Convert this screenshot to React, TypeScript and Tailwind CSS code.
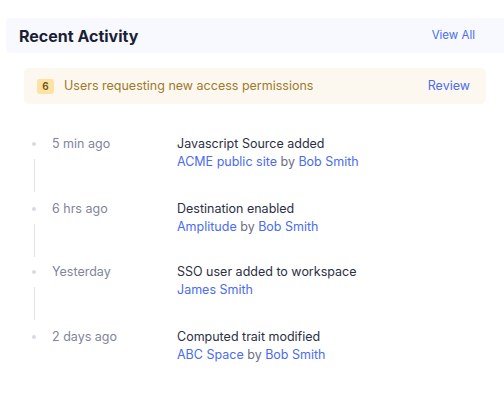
import React from "react";

interface IActivity {
    time: string;
    title: string;
    target?: string;
    actor: string;
    height: string;
}

const activities: IActivity[] = [
    { time: "5 min ago", title: "Javascript Source added", target: "ACME public site", actor: "Bob Smith", height: "h-[65px]" },
    { time: "6 hrs ago", title: "Destination enabled", target: "Amplitude", actor: "Bob Smith", height: "h-[63px]" },
    { time: "Yesterday", title: "SSO user added to workspace", actor: "James Smith", height: "h-[65px]" },
    { time: "2 days ago", title: "Computed trait modified", target: "ABC Space", actor: "Bob Smith", height: "h-[65px]" },
];

const App: React.FC = () => {
    return (
        <div className="w-full h-[406px] bg-white overflow-hidden font-['Inter','Noto_Sans',sans-serif] pt-[18px]">
            <div className="ml-[6px] h-[35px] bg-[#f8f9fe] rounded-l-[4px] flex items-center justify-between pl-[13px] pr-[29px]">
                <h2 className="text-[16px] font-bold text-[#1a1f36]">Recent Activity</h2>
                <button className="text-[11.5px] text-[#4b6cf0]">View All</button>
            </div>

            <div className="mt-[15px] ml-[24px] mr-[18px] h-[36px] bg-[#fdf8ef] rounded-[5px] flex items-center pl-[13px] pr-[16px]">
                <span className="w-[17px] h-[15px] rounded-[3px] bg-[#fde3a3] text-[#6b4f16] text-[10px] font-semibold flex items-center justify-center">6</span>
                <span className="ml-[10px] text-[12.5px] text-[#a07a2c] flex-1">Users requesting new access permissions</span>
                <button className="text-[12.5px] text-[#4b6cf0]">Review</button>
            </div>

            <div className="mt-[31px] pl-[32px]">
                {activities.map((item, index) => (
                    <div key={index} className={`flex ${item.height}`}>
                        <div className="w-[4px] flex flex-col items-center pt-[7px]">
                            <div className="w-[4px] h-[4px] rounded-full bg-[#d8dbe3]" />
                            {index < activities.length - 1 && <div className="mt-[13px] w-px h-[33px] bg-[#dfe1e8]" />}
                        </div>
                        <div className="ml-[16px] w-[125px] text-[12.5px] leading-[18px] text-[#80859a]">{item.time}</div>
                        <div className="text-[12.5px] leading-[18px]">
                            <div className="text-[#2a2f45]">{item.title}</div>
                            <div className="text-[#6b7084]">
                                {item.target && (
                                    <>
                                        <span className="text-[#4b6cf0]">{item.target}</span> by{" "}
                                    </>
                                )}
                                <span className="text-[#4b6cf0]">{item.actor}</span>
                            </div>
                        </div>
                    </div>
                ))}
            </div>
        </div>
    );
};

export default App;
